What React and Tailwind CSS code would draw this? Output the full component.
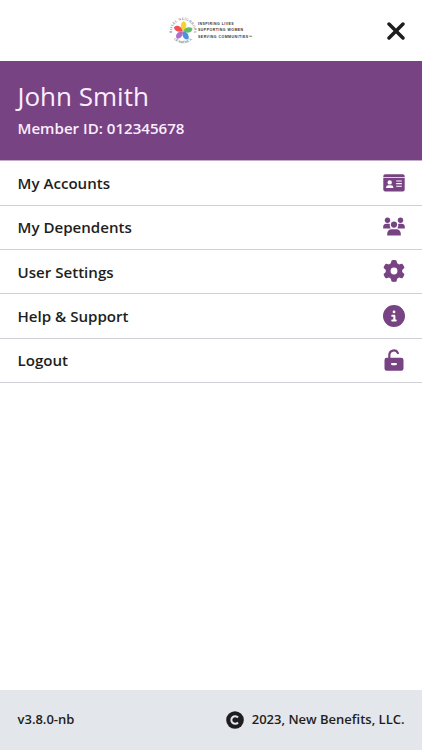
import React from 'react';
import { FaXmark, FaGear, FaCircleInfo } from 'react-icons/fa6';

const petals = ['#f2d32f', '#62bd6a', '#4c93d9', '#b06fc4', '#f0524f'];

const Emblem = () => (
  <svg viewBox="0 0 28 28" className="h-7 w-7">
    <path id="ring" d="M6.2 21.8 A11 11 0 1 1 21.8 21.8" fill="none" />
    <path id="ring-bottom" d="M4 21.5 A12.8 12.8 0 0 0 24 21.5" fill="none" />
    <text fontSize="3.6" fill="#555" className="font-['Liberation_Serif',serif]">
      <textPath href="#ring" startOffset="50%" textAnchor="middle" textLength="38">ROYAL NEIGHBORS</textPath>
    </text>
    <text fontSize="3.6" fill="#555" className="font-['Liberation_Serif',serif]">
      <textPath href="#ring-bottom" startOffset="50%" textAnchor="middle" textLength="20">OF AMERICA</textPath>
    </text>
    {petals.map((color, i) => (
      <path
        key={color}
        d="M14 13.7 C10.6 12.6 8.6 8 11 4.8 C15 4.2 17.2 9.2 14 13.7Z"
        fill={color}
        transform={`rotate(${i * 72 + 20} 14 14)`}
      />
    ))}
  </svg>
);

const IdCardIcon = () => (
  <svg viewBox="0 0 22 18" className="h-[18px] w-[22px]" fill="currentColor">
    <path d="M2.2.3h17.6A1.9 1.9 0 0 1 21.7 2.2v1H.3v-1A1.9 1.9 0 0 1 2.2.3Z" />
    <path
      fillRule="evenodd"
      d="M.3 4.1h21.4v11.4a2 2 0 0 1-2 2H2.3a2 2 0 0 1-2-2ZM6.7 6.2a2.2 2.2 0 1 0 0 4.4 2.2 2.2 0 0 0 0-4.4ZM5.4 11.3a2.3 2.3 0 0 0-2.3 2.3v.4h7.2v-.4A2.3 2.3 0 0 0 8 11.3ZM13.2 6.5v1.1h5.6V6.5Zm0 2.6v1.1h5.6V9.1Zm0 2.6v1.1h5.6v-1.1Z"
    />
  </svg>
);

const PeopleIcon = () => (
  <svg viewBox="0 0 22 19" className="h-[19px] w-[22px]" fill="currentColor">
    <circle cx="4.5" cy="3.3" r="2.7" />
    <circle cx="17.5" cy="3.3" r="2.7" />
    <circle cx="11" cy="7.6" r="3.1" />
    <path d="M.2 11.4V10a3.3 3.3 0 0 1 3.3-3.3h1.8c.6 0 1.2.2 1.6.4a4.7 4.7 0 0 0 .7 4.3Z" />
    <path d="M21.8 11.4V10a3.3 3.3 0 0 0-3.3-3.3h-1.8c-.6 0-1.2.2-1.6.4a4.7 4.7 0 0 1-.7 4.3Z" />
    <path d="M4.2 18.5v-1.7a4.4 4.4 0 0 1 4.4-4.5h4.8a4.4 4.4 0 0 1 4.4 4.5v1.7Z" />
  </svg>
);

const UnlockIcon = () => (
  <svg viewBox="0 0 20 22" className="h-[22px] w-5" fill="currentColor">
    <path d="M5.3 9.5V5.9a4.5 4.5 0 0 1 8.6-1.8" fill="none" stroke="currentColor" strokeWidth="2.2" strokeLinecap="round" />
    <path
      fillRule="evenodd"
      d="M2.7 8.7h14.6a2.2 2.2 0 0 1 2.2 2.2v8.6a2.2 2.2 0 0 1-2.2 2.2H2.7a2.2 2.2 0 0 1-2.2-2.2v-8.6a2.2 2.2 0 0 1 2.2-2.2Zm5.4 5.3a1.1 1.1 0 0 0 0 2.2h3.8a1.1 1.1 0 0 0 0-2.2Z"
    />
  </svg>
);

const CopyrightIcon = () => (
  <svg viewBox="0 0 18 18" className="h-[18px] w-[18px]">
    <circle cx="9" cy="9" r="8.8" fill="#1e1e20" />
    <path d="M12 6.5a3.8 3.8 0 1 0 0 5" fill="none" stroke="#e3e7ec" strokeWidth="2" />
  </svg>
);

const App = () => {
  const menuItems = [
    { label: 'My Accounts', icon: <IdCardIcon /> },
    { label: 'My Dependents', icon: <PeopleIcon /> },
    { label: 'User Settings', icon: <FaGear className="h-[22px] w-[22px]" /> },
    { label: 'Help & Support', icon: <FaCircleInfo className="h-[22px] w-[22px]" /> },
    { label: 'Logout', icon: <UnlockIcon /> },
  ];

  return (
    <div className="flex h-[750px] w-full flex-col bg-white font-['Open_Sans',sans-serif] text-[#1e1e20]">
      {/* Header */}
      <header className="grid h-[61px] shrink-0 grid-cols-[1fr_84px_1fr] items-center">
        <div />
        <div className="flex items-center">
          <Emblem />
          <div className="ml-px flex flex-col font-['Liberation_Sans',sans-serif] text-[3.5px] leading-[6.5px] font-bold whitespace-nowrap text-[#333]">
            <span className="tracking-[0.48px]">INSPIRING LIVES</span>
            <span className="tracking-[0.48px]">SUPPORTING WOMEN</span>
            <span className="tracking-[0.48px]">SERVING COMMUNITIES™</span>
          </div>
        </div>
        <button className="mr-3 justify-self-end" aria-label="Close">
          <FaXmark className="h-[28px] w-[28px]" />
        </button>
      </header>

      {/* Member */}
      <section className="h-[99.4px] shrink-0 bg-[#774383] px-[17.5px] pt-[17px] text-[#fbeeff]">
        <h1 className="text-[26px] leading-9 font-normal">John Smith</h1>
        <p className="mt-1 text-[15.1px] leading-5 font-semibold">Member ID: 012345678</p>
      </section>

      <nav className="border-t border-[#c3acca]">
        {menuItems.map((item) => (
          <a key={item.label} className="flex h-[44.35px] items-center justify-between border-b border-[#cfcfd6] px-[17.5px]">
            <span className="text-[15.1px] leading-5 font-semibold">{item.label}</span>
            <span className="flex w-[22px] justify-center pb-px text-[#774383]">{item.icon}</span>
          </a>
        ))}
      </nav>

      {/* Footer */}
      <footer className="mt-auto flex h-[60px] items-center justify-between bg-[#e3e7ec] px-[17.5px] pb-px text-[13px] font-semibold">
        <span>v3.8.0-nb</span>
        <span className="flex items-center gap-2">
          <CopyrightIcon />
          2023, New Benefits, LLC.
        </span>
      </footer>
    </div>
  );
};

export default App;
